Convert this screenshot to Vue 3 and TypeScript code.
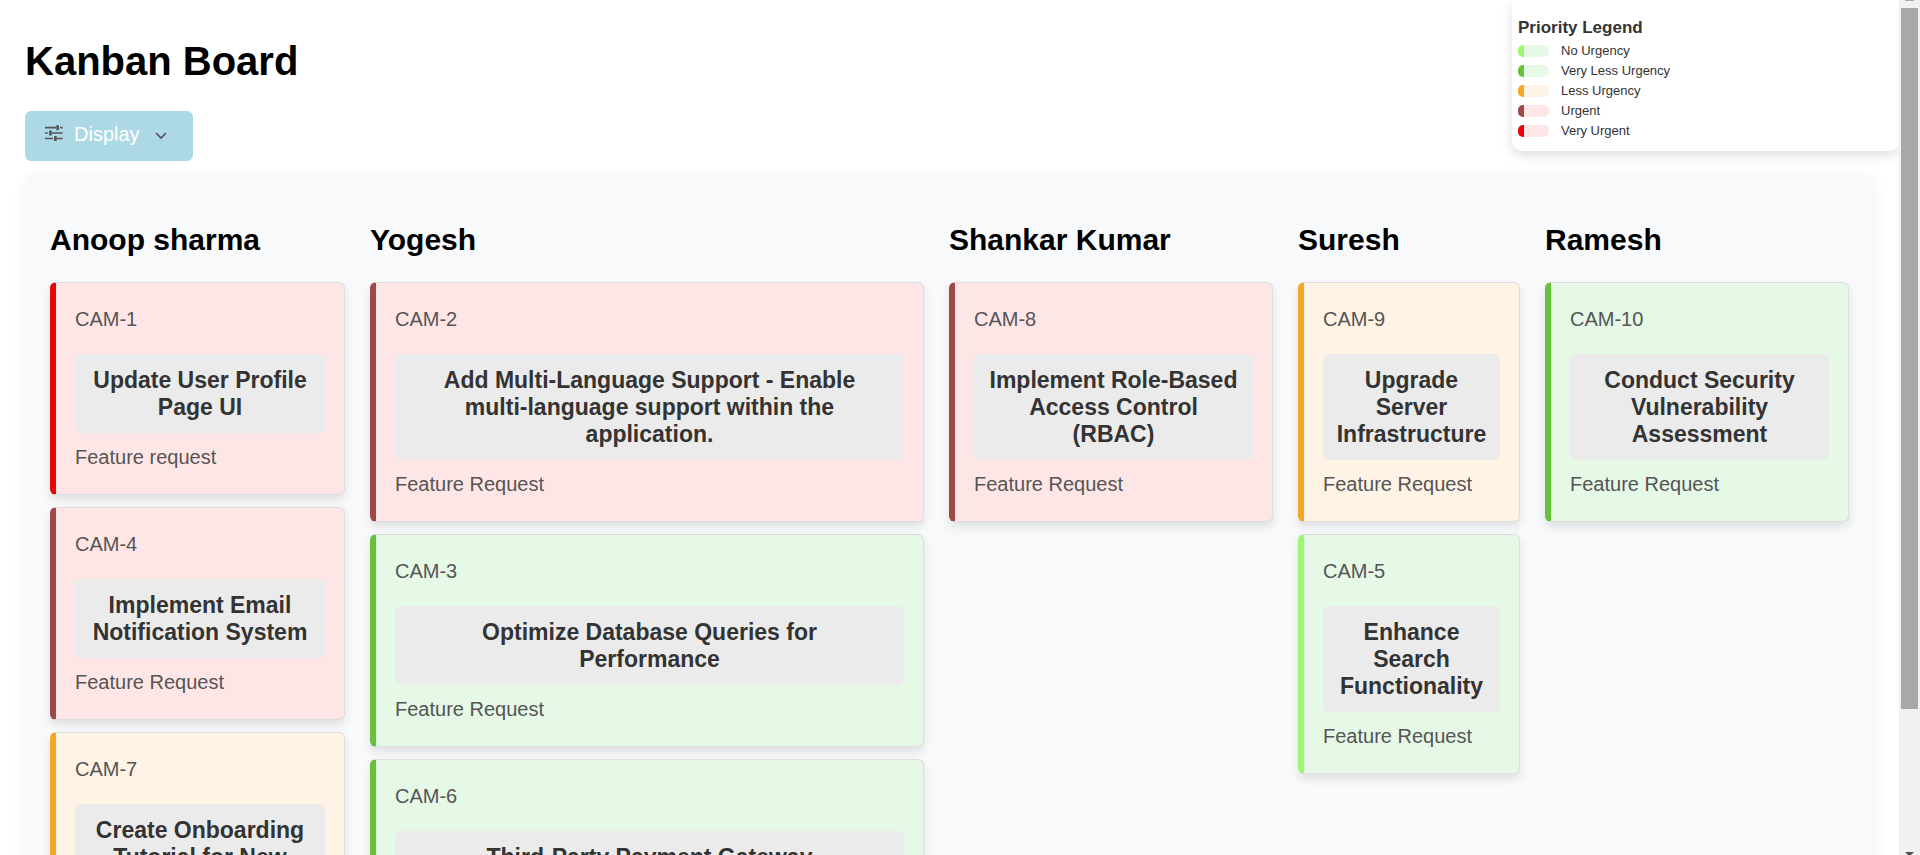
<script setup lang="ts">
type Priority = 'none' | 'low' | 'medium' | 'high' | 'critical'

interface Ticket {
  id: string
  title: string
  tag: string
  priority: Priority
}

interface Column {
  name: string
  tickets: Ticket[]
}

const legend: { label: string; priority: Priority }[] = [
  { label: 'No Urgency', priority: 'none' },
  { label: 'Very Less Urgency', priority: 'low' },
  { label: 'Less Urgency', priority: 'medium' },
  { label: 'Urgent', priority: 'high' },
  { label: 'Very Urgent', priority: 'critical' },
]

const columns: Column[] = [
  {
    name: 'Anoop sharma',
    tickets: [
      { id: 'CAM-1', title: 'Update User Profile Page UI', tag: 'Feature request', priority: 'critical' },
      { id: 'CAM-4', title: 'Implement Email Notification System', tag: 'Feature Request', priority: 'high' },
      { id: 'CAM-7', title: 'Create Onboarding Tutorial for New Users', tag: 'Feature Request', priority: 'medium' },
    ],
  },
  {
    name: 'Yogesh',
    tickets: [
      {
        id: 'CAM-2',
        title: 'Add Multi-Language Support - Enable multi-language support within the application.',
        tag: 'Feature Request',
        priority: 'high',
      },
      { id: 'CAM-3', title: 'Optimize Database Queries for Performance', tag: 'Feature Request', priority: 'low' },
      { id: 'CAM-6', title: 'Third-Party Payment Gateway', tag: 'Feature Request', priority: 'low' },
    ],
  },
  {
    name: 'Shankar Kumar',
    tickets: [
      { id: 'CAM-8', title: 'Implement Role-Based Access Control (RBAC)', tag: 'Feature Request', priority: 'high' },
    ],
  },
  {
    name: 'Suresh',
    tickets: [
      { id: 'CAM-9', title: 'Upgrade Server Infrastructure', tag: 'Feature Request', priority: 'medium' },
      { id: 'CAM-5', title: 'Enhance Search Functionality', tag: 'Feature Request', priority: 'none' },
    ],
  },
  {
    name: 'Ramesh',
    tickets: [
      { id: 'CAM-10', title: 'Conduct Security Vulnerability Assessment', tag: 'Feature Request', priority: 'low' },
    ],
  },
]
</script>

<template>
  <div class="shell">
    <main class="page">
      <h1>Kanban Board</h1>
      <button class="display" type="button">
        <svg class="tune" viewBox="0 0 20 20" aria-hidden="true">
          <path d="M1 3.7h11M16 3.7h2.7M1 9h2.7M8 9h10.7M1 14.5h8M13 14.5h5.7" />
          <path class="thick" d="M13.6 1.2v5M6.4 6.5v5M11.4 12v5" />
        </svg>
        <span>Display</span>
        <svg class="chevron" viewBox="0 0 14 10" aria-hidden="true">
          <path d="M2 2l5 5 5-5" />
        </svg>
      </button>

      <div class="board">
        <section v-for="column in columns" :key="column.name" class="column">
          <h2>{{ column.name }}</h2>
          <article v-for="ticket in column.tickets" :key="ticket.id" class="card" :class="ticket.priority">
            <p>{{ ticket.id }}</p>
            <h3>{{ ticket.title }}</h3>
            <p>{{ ticket.tag }}</p>
          </article>
        </section>
      </div>

      <aside class="legend">
        <h4>Priority Legend</h4>
        <ul>
          <li v-for="item in legend" :key="item.priority">
            <span class="swatch" :class="item.priority"></span>
            {{ item.label }}
          </li>
        </ul>
      </aside>
    </main>

    <div class="scrollbar" aria-hidden="true">
      <span class="arrow up"></span>
      <span class="thumb"></span>
      <span class="arrow down"></span>
    </div>
  </div>
</template>

<style>
body {
  margin: 0;
  background: #fff;
}
</style>

<style scoped>
.shell {
  display: flex;
  height: 100vh;
  overflow: hidden;
  font-family: Arial, "Liberation Sans", sans-serif;
}

.page {
  position: relative;
  flex: 1;
  min-width: 0;
  overflow: hidden;
  box-sizing: border-box;
  padding: 38px 25px 0;
}

h1 {
  margin: 0 0 27px;
  color: #000;
  font-size: 40px;
  line-height: 46px;
}

.display {
  display: flex;
  align-items: center;
  gap: 10px;
  height: 50px;
  padding: 0 25px 4px 19px;
  border: 0;
  border-radius: 6px;
  background: #add8e6;
  color: #fff;
  font-family: inherit;
  font-size: 20px;
  line-height: 23px;
}

.display svg {
  fill: none;
  stroke: #555;
  stroke-width: 1.7;
}

.tune {
  width: 20px;
  height: 20px;
}

.display .thick {
  stroke-width: 2.7;
}

.chevron {
  width: 14px;
  height: 10px;
  margin: 4px 0 0 4px;
}

.board {
  display: grid;
  grid-template-columns: 295fr 554fr 324fr 222fr 304fr;
  align-items: start;
  gap: 25px;
  margin-top: 12px;
  padding: 50px 25px 25px;
  border-radius: 12px;
  background: #f8f9fb;
  box-shadow: 0 5px 15px rgba(0, 0, 0, 0.06);
}

.column {
  display: flex;
  flex-direction: column;
  gap: 12px;
  min-width: 0;
}

h2 {
  margin: 0 0 13px;
  color: #000;
  font-size: 30px;
  line-height: 34px;
}

.card {
  padding: 25px 19px;
  border: 1px solid #ddd;
  border-left: 6px solid var(--accent);
  border-radius: 6px;
  background: var(--tint);
  box-shadow: 0 5px 10px rgba(0, 0, 0, 0.1);
}

.card p {
  margin: 0;
  color: #555;
  font-size: 20px;
  line-height: 23px;
}

.card h3 {
  margin: 23px 0 13px;
  padding: 13px 5% 12px;
  border-radius: 6px;
  background: #ebebeb;
  color: #333;
  font-size: 23px;
  line-height: 27px;
  text-align: center;
}

.none {
  --accent: #9cf871;
  --tint: #e6f8e6;
}

.low {
  --accent: #67c23a;
  --tint: #e6f8e6;
}

.medium {
  --accent: #f5a623;
  --tint: #fff3e6;
}

.high {
  --accent: #9e4848;
  --tint: #ffe6e6;
}

.critical {
  --accent: #e90606;
  --tint: #ffe6e6;
}

.legend {
  position: absolute;
  top: 0;
  right: 0;
  box-sizing: border-box;
  width: 387px;
  padding: 18px 6px 12px;
  border-radius: 0 0 10px 10px;
  background: #fff;
  color: #333;
  box-shadow: 0 5px 12px rgba(0, 0, 0, 0.12);
}

.legend h4 {
  margin: 0 0 5px;
  font-size: 17px;
  line-height: 20px;
}

.legend ul {
  display: grid;
  gap: 4px;
  margin: 0;
  padding: 0;
  list-style: none;
}

.legend li {
  display: flex;
  align-items: center;
  gap: 12px;
  font-size: 13px;
  line-height: 16px;
}

.swatch {
  box-sizing: border-box;
  width: 31px;
  height: 12px;
  border-left: 6px solid var(--accent);
  border-radius: 5px;
  background: var(--tint);
}

.scrollbar {
  display: flex;
  flex-direction: column;
  align-items: center;
  width: 21px;
  background: #f1f1f1;
}

.thumb {
  width: 17px;
  height: 82%;
  margin: 7px 0 auto;
  background: #a8a8a8;
}

.arrow {
  box-sizing: border-box;
  width: 9px;
}

.arrow.up {
  height: 1px;
  background: #a8a8a8;
}

.arrow.down {
  height: 3px;
  border: 3px solid transparent;
  border-top-color: #505050;
  border-bottom: 0;
}
</style>
